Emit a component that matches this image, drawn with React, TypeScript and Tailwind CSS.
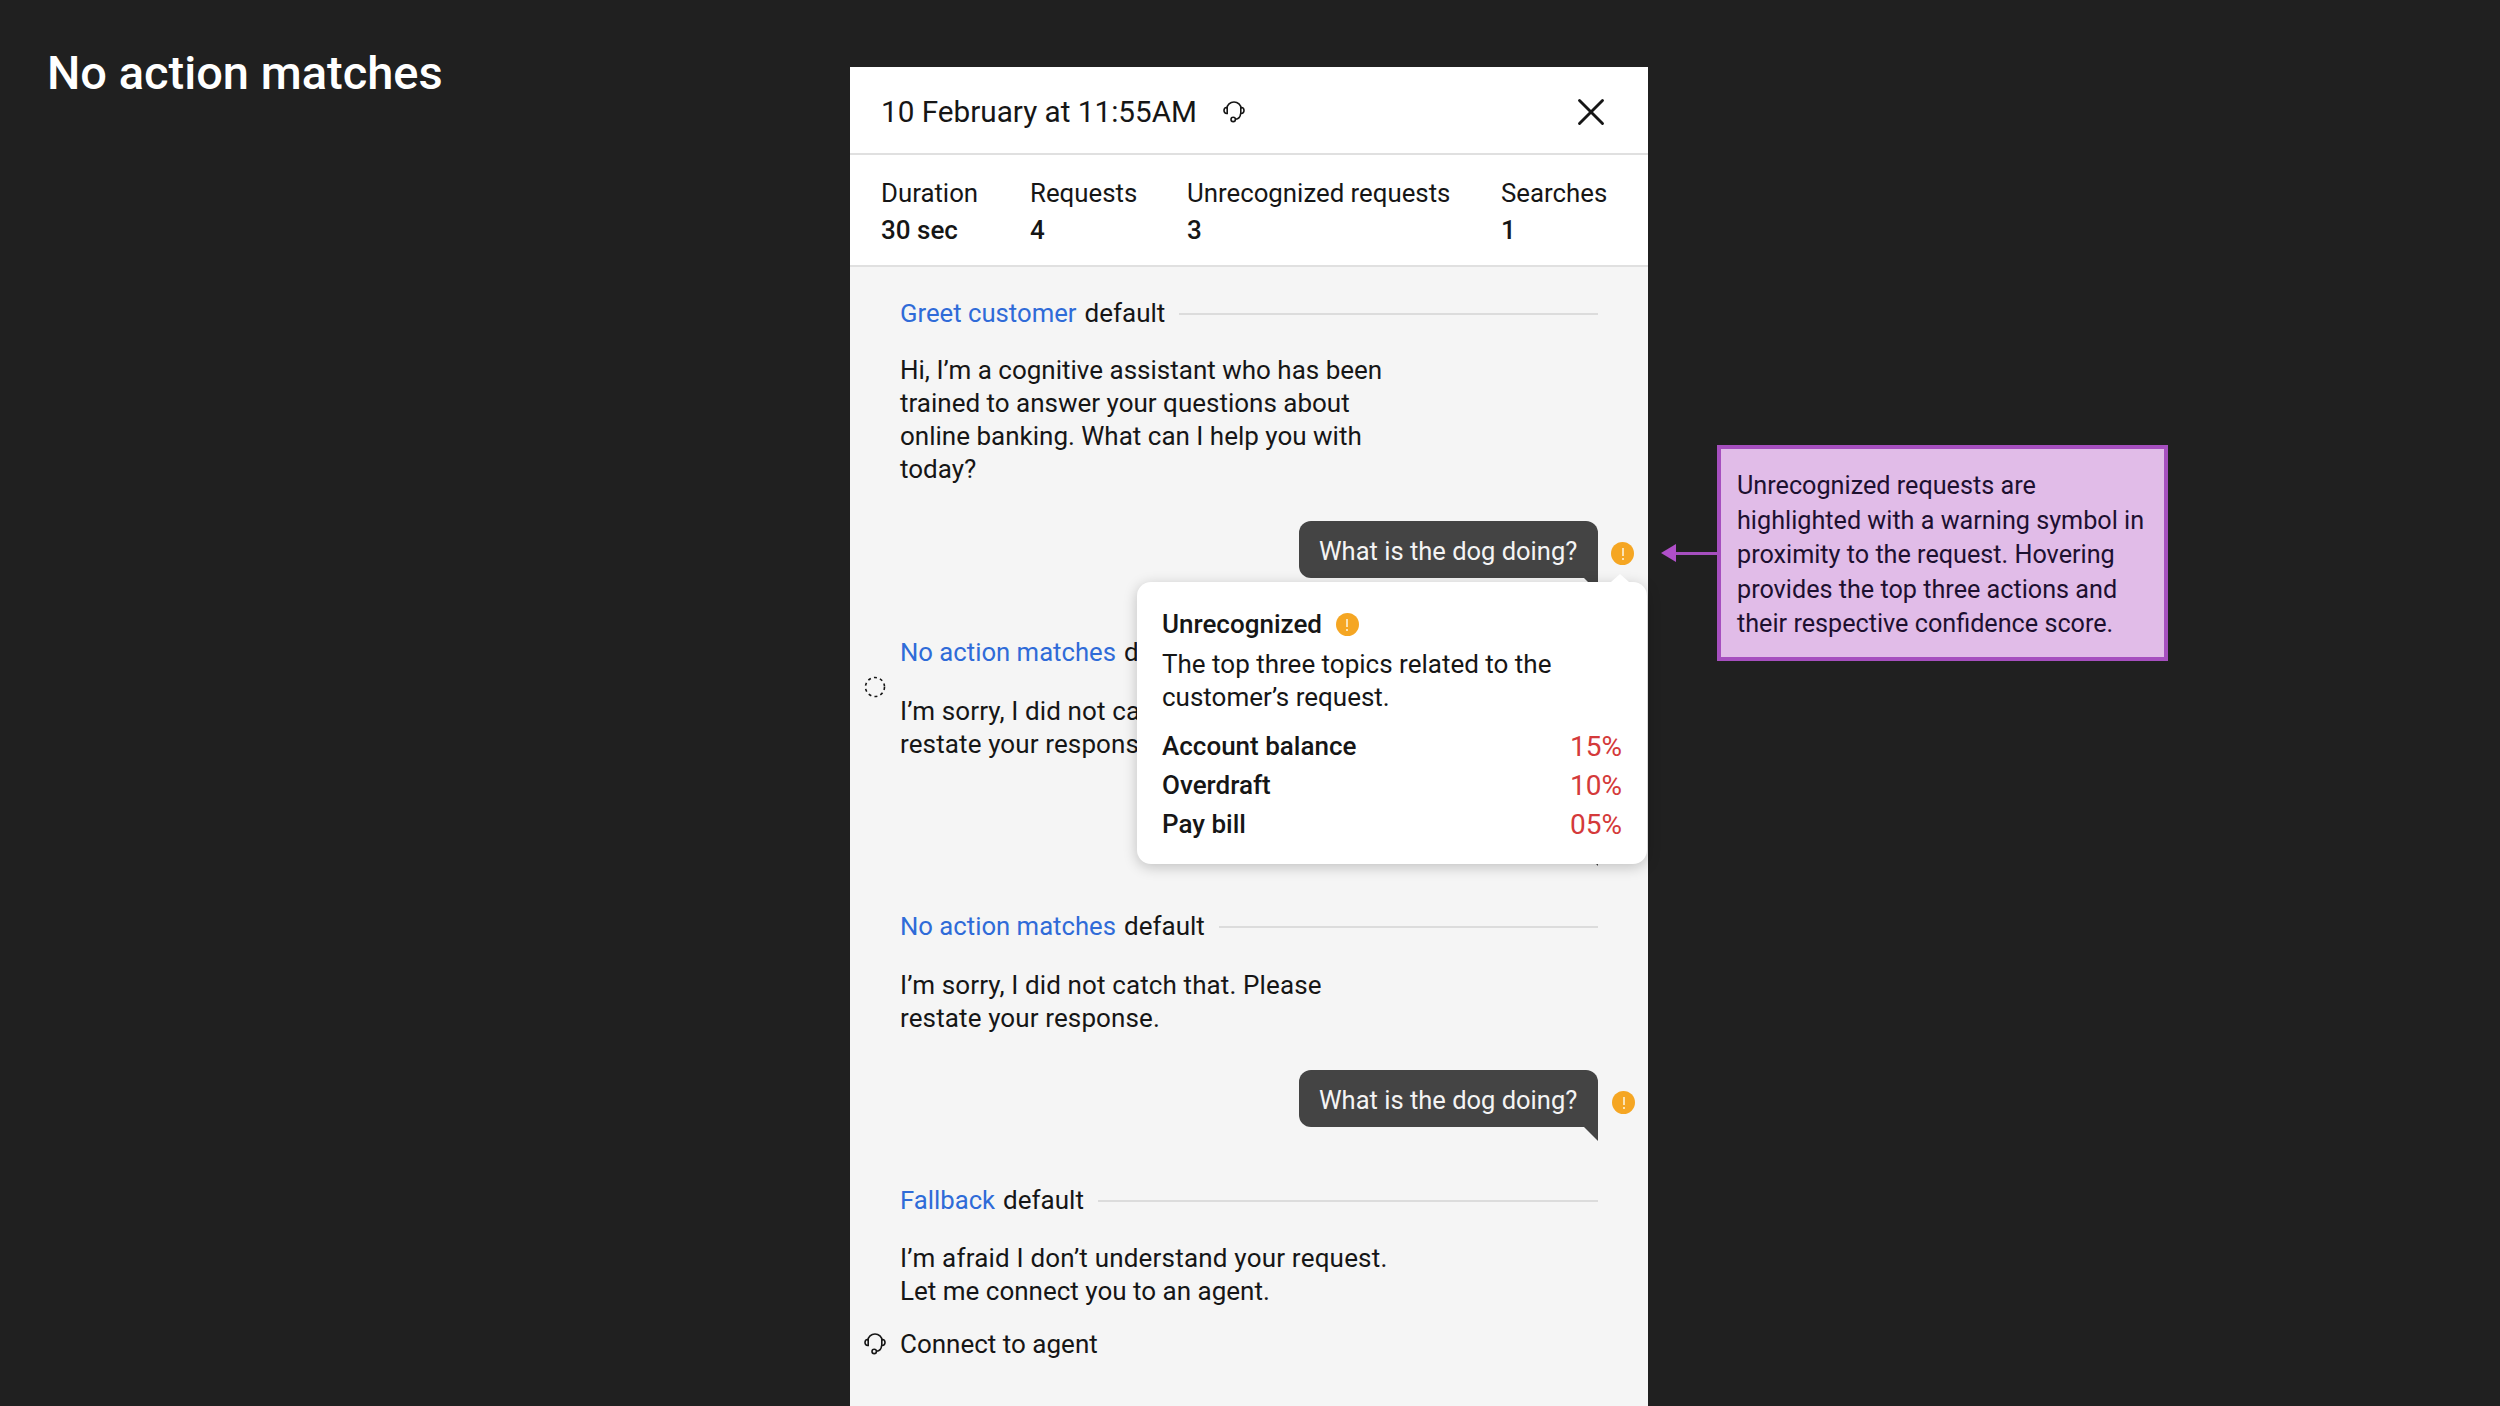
import React from 'react';
import { X } from 'lucide-react';

function HeadsetIcon() {
  return (
    <svg width="22" height="22" viewBox="0 0 22 22" fill="none" stroke="#161616" strokeWidth="1.6">
      <path d="M4 7.5 A7 6.5 0 0 1 18 7.5" />
      <path d="M4.2 6.5 H3.6 A2.6 3 0 0 0 3.6 12.5 H4.2 Z" />
      <path d="M17.8 6.5 H18.4 A2.6 3 0 0 1 18.4 12.5 H17.8 Z" />
      <path d="M17.6 12.5 C17.4 15.8 15.6 18 12.4 18.2" />
      <circle cx="10.2" cy="18.4" r="2.2" />
    </svg>
  );
}

function WarningDot() {
  return (
    <span className="w-[23px] h-[23px] rounded-full bg-[#f5a623] flex items-center justify-center shrink-0">
      <span className="flex flex-col items-center gap-[2px]">
        <span className="w-[2px] h-[8px] bg-[#fbe3b4]" />
        <span className="w-[2px] h-[2px] bg-[#fbe3b4]" />
      </span>
    </span>
  );
}

function Heading({ name }: { name: string }) {
  return (
    <div className="flex items-center h-[33px]">
      <span className="text-[#2f6bd8] text-[25.7px]">{name}</span>
      <span className="ml-[8px]">default</span>
      <div className="flex-1 h-[2px] bg-[#dcdcdc] ml-[14px]" />
    </div>
  );
}

function Bubble({ warning = 0 }: { warning?: number }) {
  return (
    <div className="relative flex justify-end">
      <div className="relative w-[299px] h-[57px] rounded-[12px] rounded-br-none bg-[#444444] text-[#f4f4f4] text-[25.5px] flex items-center pl-[20px] pt-[4px] whitespace-nowrap">
        What is the dog doing?
        <div className="absolute top-full right-0 w-0 h-0 border-l-[14px] border-l-transparent border-t-[14px] border-t-[#444444]" />
      </div>
      {warning > 0 && (
        <div className="absolute left-full top-[21px]" style={{ marginLeft: warning }}>
          <WarningDot />
        </div>
      )}
    </div>
  );
}

function Popover() {
  return (
    <div className="absolute left-[287px] top-[515px] w-[510px] h-[282px] bg-white rounded-[14px] shadow-[0_3px_14px_rgba(0,0,0,0.22)] px-[25px] pt-[26px] z-10">
      <div className="absolute top-[-8px] right-[18px] w-0 h-0 border-l-[9px] border-r-[9px] border-b-[8px] border-l-transparent border-r-transparent border-b-white" />
      <div className="flex items-center gap-[14px] h-[33px] font-medium">
        Unrecognized
        <WarningDot />
      </div>
      <p className="mt-[7px] whitespace-nowrap">
        The top three topics related to the
        <br />
        customer’s request.
      </p>
      <div className="mt-[16px] flex flex-col gap-[6px]">
        {[
          ['Account balance', '15%'],
          ['Overdraft', '10%'],
          ['Pay bill', '05%'],
        ].map(([label, pct]) => (
          <div key={label} className="flex justify-between h-[33px] items-center font-medium">
            <span>{label}</span>
            <span className="text-[#d43a3a] font-normal text-[28px]">{pct}</span>
          </div>
        ))}
      </div>
    </div>
  );
}

export default function App() {
  return (
    <div className="h-[1406px] overflow-hidden bg-[#202020] flex items-start text-[#161616] text-[26px] leading-[33px] font-['Roboto',sans-serif]">
      <div className="w-[850px] shrink-0 pl-[47px] pt-[50px] text-white text-[47px] leading-[46px] font-medium">
        No action matches
      </div>

      <div className="relative w-[798px] shrink-0 mt-[67px] h-[1339px] bg-[#f5f5f5]">
        <div className="h-[88px] bg-white border-b-2 border-[#e0e0e0] flex items-center pl-[31px] pr-[34px] pt-[3px] text-[29.7px]">
          <span>10 February at 11:55AM</span>
          <span className="ml-[26px]">
            <HeadsetIcon />
          </span>
          <X className="ml-auto" size={46} strokeWidth={1.5} />
        </div>
        <div className="h-[112px] bg-white border-b-2 border-[#e0e0e0] pl-[31px] pt-[22px] grid grid-cols-[149px_157px_314px_auto]">
          {[
            ['Duration', '30 sec'],
            ['Requests', '4'],
            ['Unrecognized requests', '3'],
            ['Searches', '1'],
          ].map(([label, value]) => (
            <div key={label} className="whitespace-nowrap">
              <div className="h-[37px] text-[25.8px]">{label}</div>
              <div className="font-medium">{value}</div>
            </div>
          ))}
        </div>

        <div className="pl-[50px] pr-[50px] pt-[30px]">
          <Heading name="Greet customer" />
          <p className="mt-[24px] whitespace-nowrap">
            Hi, I’m a cognitive assistant who has been
            <br />
            trained to answer your questions about
            <br />
            online banking. What can I help you with
            <br />
            today?
          </p>
          <div className="mt-[35px]">
            <Bubble warning={13} />
          </div>

          <div className="mt-[58px]">
            <Heading name="No action matches" />
          </div>
          <p className="mt-[26px] whitespace-nowrap tracking-[0.12px]">
            I’m sorry, I did not catch that. Please
            <br />
            restate your response.
          </p>
          <div className="mt-[34px]">
            <Bubble />
          </div>

          <div className="mt-[58px]">
            <Heading name="No action matches" />
          </div>
          <p className="mt-[26px] whitespace-nowrap tracking-[0.12px]">
            I’m sorry, I did not catch that. Please
            <br />
            restate your response.
          </p>
          <div className="mt-[35px]">
            <Bubble warning={14} />
          </div>

          <div className="mt-[57px]">
            <Heading name="Fallback" />
          </div>
          <p className="mt-[25px] whitespace-nowrap">
            <span className="tracking-[0.2px]">I’m afraid I don’t understand your request.</span>
            <br />
            Let me connect you to an agent.
          </p>
          <div className="relative mt-[20px]">
            <span className="absolute left-[-36px] top-[5px]">
              <HeadsetIcon />
            </span>
            Connect to agent
          </div>
        </div>

        <svg className="absolute left-[14px] top-[609px]" width="22" height="22" viewBox="0 0 22 22" fill="none">
          <circle cx="11" cy="11" r="9.5" stroke="#161616" strokeWidth="1.6" strokeDasharray="3 3.2" />
        </svg>
        <Popover />
      </div>

      <div className="relative shrink-0 ml-[69px] mt-[445px] w-[451px] h-[216px] bg-[#e1bce8] border-[4px] border-[#a64fbf] pl-[16px] pt-[20px] text-[#1d1030] text-[25.2px] leading-[34.5px] whitespace-nowrap">
        Unrecognized requests are
        <br />
        highlighted with a warning symbol in
        <br />
        proximity to the request. Hovering
        <br />
        provides the top three actions and
        <br />
        their respective confidence score.
        <div className="absolute right-full top-[95px] flex items-center">
          <div className="w-0 h-0 border-y-[9px] border-y-transparent border-r-[15px] border-r-[#b04fc9]" />
          <div className="w-[45px] h-[3px] bg-[#a64fbf]" />
        </div>
      </div>
    </div>
  );
}
